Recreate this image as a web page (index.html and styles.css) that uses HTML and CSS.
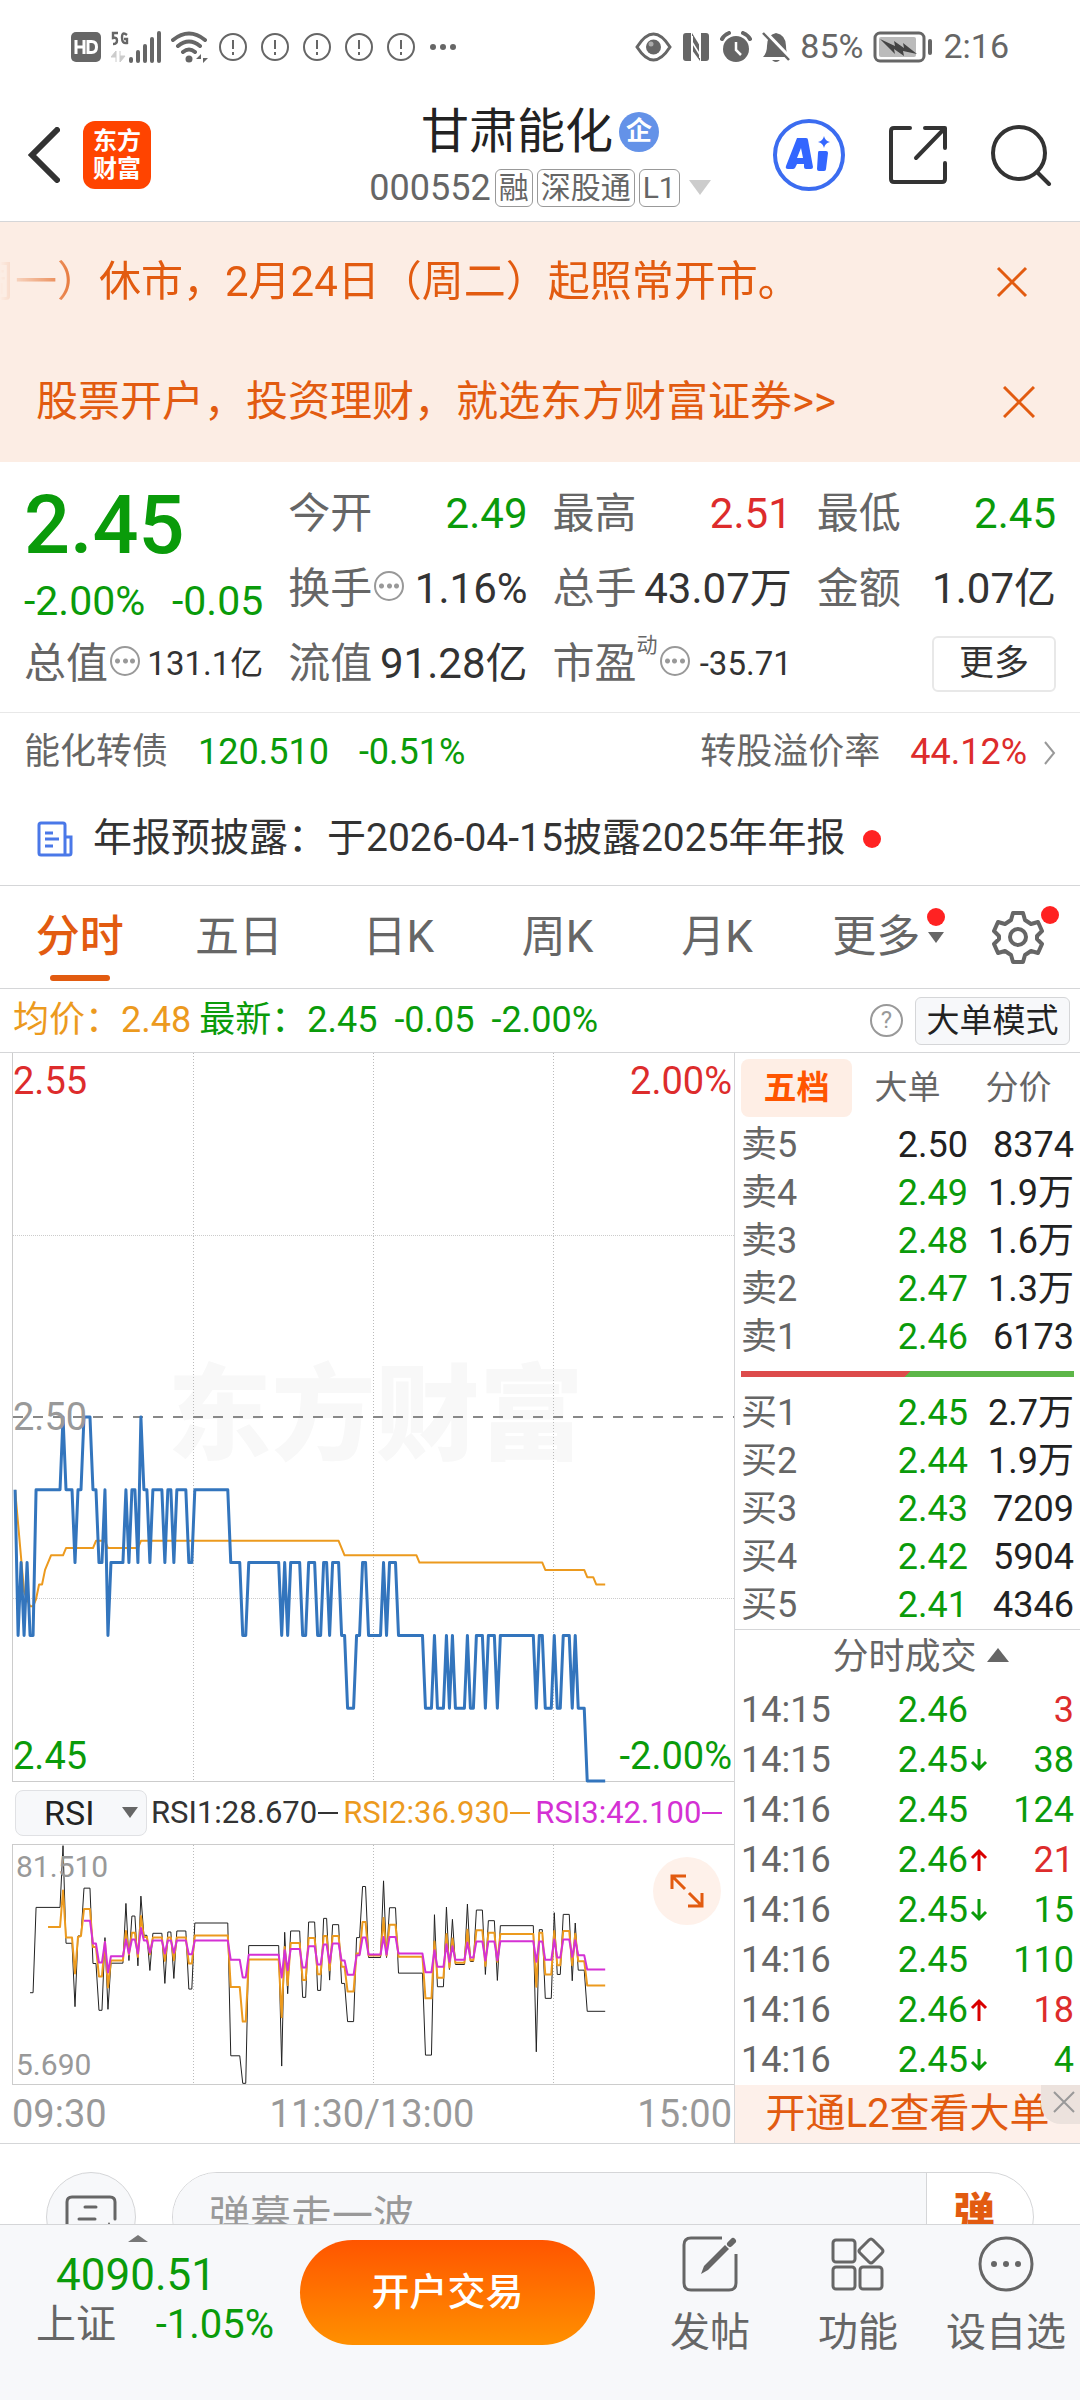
FILE: index.html
```html
<!DOCTYPE html>
<html lang="zh-CN">
<head>
    <meta charset="UTF-8">
    <meta name="viewport" content="width=device-width, initial-scale=1.0">
    <title>甘肃能化 000552</title>
    <link rel="stylesheet" href="styles.css">
</head>
<body>
    <div class="status-bar">
        <div class="status-left">
            <svg width="30" height="30" viewBox="0 0 30 30"><rect width="30" height="30" rx="5" fill="#666"/><path d="M5 8v14M13 8v14M5 15h8M17 9.500h3.500q5 0 5 5.500t-5 5.500h-3.500z" fill="none" stroke="#fff" stroke-width="3"/></svg>
            <svg class="signal" width="50" height="32" viewBox="0 0 50 32">
                <path d="M7 2H2v5q4-1 4 2.500T2 13M16 4q-5-4-5 2.500t5 5.500V8h-3" fill="none" stroke="#666" stroke-width="2.400"/>
                <path d="M5 31V20l-5 6h5M9 20v11l5-6H9" fill="#ccc" stroke="#ccc"/>
                <g fill="#666"><rect x="18" y="26" width="4" height="6" rx="2"/><rect x="25" y="19" width="4" height="13" rx="2"/><rect x="32" y="13" width="4" height="19" rx="2"/><rect x="39" y="6" width="4" height="26" rx="2"/><rect x="46" y="0" width="4" height="32" rx="2"/></g>
            </svg>
            <svg width="38" height="32" viewBox="0 0 38 32"><g fill="none" stroke="#666" stroke-width="4" stroke-linecap="round"><path d="M2 9q16-13 32 0M7 15q11-9 22 0M12 21q6-5 12 0"/></g><circle cx="18" cy="28" r="3.500" fill="#666"/><path d="M30 32v-9l-5 5h5M32 23v9l5-5h-5" fill="#666"/></svg>
            <svg class="alert" viewBox="0 0 28 28"><circle cx="14" cy="14" r="13"/><path d="M14 7v9M14 19v3"/></svg>
            <svg class="alert" viewBox="0 0 28 28"><circle cx="14" cy="14" r="13"/><path d="M14 7v9M14 19v3"/></svg>
            <svg class="alert" viewBox="0 0 28 28"><circle cx="14" cy="14" r="13"/><path d="M14 7v9M14 19v3"/></svg>
            <svg class="alert" viewBox="0 0 28 28"><circle cx="14" cy="14" r="13"/><path d="M14 7v9M14 19v3"/></svg>
            <svg class="alert" viewBox="0 0 28 28"><circle cx="14" cy="14" r="13"/><path d="M14 7v9M14 19v3"/></svg>
            <svg width="28" height="8" viewBox="0 0 28 8" fill="#666"><circle cx="4" cy="4" r="3"/><circle cx="14" cy="4" r="3"/><circle cx="24" cy="4" r="3"/></svg>
        </div>
        <div class="status-right">
            <svg width="37" height="30" viewBox="0 0 37 30"><path d="M2 15Q18.500-11 35 15Q18.500 41 2 15z" fill="none" stroke="#666" stroke-width="3"/><circle cx="18.500" cy="15" r="7.500" fill="#666"/><circle cx="16" cy="12" r="2.500" fill="#aaa"/></svg>
            <svg width="28" height="30" viewBox="0 0 28 30"><path d="M4 1h5v28H4q-3 0-3-3V4q0-3 3-3zM19 1h5q3 0 3 3v22q0 3-3 3h-5z" fill="#666"/><path d="M10 1l8 13v15l-8-11z" fill="#666"/><path d="M10 4v24M18 2v24" stroke="#fff" stroke-width="2"/><path d="M10 10l8 13" stroke="#fff" stroke-width="1.500"/></svg>
            <svg width="32" height="32" viewBox="0 0 32 32"><circle cx="16" cy="18" r="13" fill="#666"/><path d="M2 8q2-4 7-6M30 8q-2-4-7-6" fill="none" stroke="#666" stroke-width="4" stroke-linecap="round"/><path d="M16 11v8l5 5" fill="none" stroke="#fff" stroke-width="2.500"/></svg>
            <svg width="28" height="32" viewBox="0 0 28 32"><path d="M1 26q4-4 4-11Q5 4 14 2Q24 4 24 15q0 7 3 11zM10 29h8q-4 4-8 0z" fill="#666"/><path d="M3 1l26 27" stroke="#fff" stroke-width="4"/><path d="M1 2l26 27" stroke="#666" stroke-width="2.500"/></svg>
            <span>85%</span>
            <svg width="60" height="32" viewBox="0 0 60 32"><rect x="2" y="2" width="49" height="28" rx="5" fill="none" stroke="#666" stroke-width="3"/><rect x="6" y="6" width="37" height="20" rx="2" fill="#bbb"/><path d="M7 8l15 7-1-5 10 7-1-5 14 11-14-3 1 5-10-7 1 5z" fill="#444"/><rect x="55" y="8" width="4" height="16" rx="2" fill="#666"/></svg>
            <span>2:16</span>
        </div>
    </div>

    <header class="header">
        <div class="header-left">
            <button type="button" class="icon-btn" aria-label="返回"><svg width="32" height="56" viewBox="0 0 32 56"><path d="M29 3L4 28L29 53" fill="none" stroke="#333" stroke-width="6" stroke-linecap="round"/></svg></button>
            <div class="logo">东方<br>财富</div>
        </div>
        <div class="header-title">
            <h1>甘肃能化<span class="badge">企</span></h1>
            <div class="code">000552<span class="tag">融</span><span class="tag">深股通</span><span class="tag">L1</span><i class="tri-down"></i></div>
        </div>
        <div class="header-right">
            <button type="button" class="icon-btn" aria-label="AI"><svg width="74" height="74" viewBox="0 0 74 74"><circle cx="37" cy="37" r="34" fill="none" stroke="#3b6cf0" stroke-width="4"/><path fill-rule="evenodd" d="M25 20h9q2 0 2 2l5 27q0 2-2 2h-5q-2 0-2-2v-3h-7l-2 4q-1 1-2 1h-5q-3 0-2-3zM29 30l-4 10h6z" fill="#3366ff"/><path d="M47 33h7q2 0 2 2l-2 16q0 2-2 2h-5q-2 0-2-2l1-16q0-2 1-2zM52 18q1 5 6 6q-5 1-6 6q-1-5-6-6q5-1 6-6z" fill="#3366ff"/></svg></button>
            <button type="button" class="icon-btn" aria-label="分享"><svg width="60" height="60" viewBox="0 0 60 60" fill="none" stroke="#333" stroke-width="4" stroke-linecap="round" stroke-linejoin="round"><path d="M22 3H6q-3 0-3 3v48q0 3 3 3h48q3 0 3-3V38M37 3h20v20M56 4L28 33"/></svg></button>
            <button type="button" class="icon-btn" aria-label="搜索"><svg width="62" height="62" viewBox="0 0 62 62" fill="none" stroke="#333" stroke-width="4" stroke-linecap="round"><circle cx="29" cy="29" r="26"/><path d="M47 48l12 12"/></svg></button>
        </div>
    </header>

    <section class="banners">
        <div class="banner">
            <p class="marquee">周一）休市，2月24日（周二）起照常开市。</p>
            <button type="button" class="icon-btn" aria-label="关闭"><svg width="32" height="32" viewBox="0 0 32 32"><path d="M2 2l28 28M30 2L2 30" stroke="#e25b10" stroke-width="3"/></svg></button>
        </div>
        <div class="banner banner-ad">
            <a href="#">股票开户，投资理财，就选东方财富证券&gt;&gt;</a>
            <button type="button" class="icon-btn" aria-label="关闭"><svg width="32" height="32" viewBox="0 0 32 32"><path d="M1 1l30 30M31 1L1 31" stroke="#e25b10" stroke-width="3"/></svg></button>
        </div>
    </section>

    <section class="quote">
        <div class="quote-price">
            <div class="price down">2.45</div>
            <div class="change down"><span>-2.00%</span><span>-0.05</span></div>
        </div>
        <div class="cell"><span>今开</span><b class="down">2.49</b></div>
        <div class="cell"><span>最高</span><b class="up">2.51</b></div>
        <div class="cell"><span>最低</span><b class="down">2.45</b></div>
        <div class="cell"><span>换手<i class="more-dot"></i></span><b>1.16%</b></div>
        <div class="cell"><span>总手</span><b>43.07万</b></div>
        <div class="cell"><span>金额</span><b>1.07亿</b></div>
        <div class="cell"><span>总值<i class="more-dot"></i></span><b class="small">131.1亿</b></div>
        <div class="cell"><span>流值</span><b>91.28亿</b></div>
        <div class="cell"><span>市盈<sup>动</sup><i class="more-dot"></i></span><b class="small">-35.71</b></div>
        <div class="cell cell-more"><button type="button" class="more-btn">更多</button></div>
    </section>

    <a href="#" class="bond">
        <span>能化转债</span><span class="down">120.510</span><span class="down">-0.51%</span>
        <span class="bond-rate">转股溢价率</span><span class="up">44.12%</span>
        <svg width="12" height="26" viewBox="0 0 12 26"><path d="M1 2l9 11l-9 11" fill="none" stroke="#999" stroke-width="2"/></svg>
    </a>
    <a href="#" class="news">
        <svg width="36" height="36" viewBox="0 0 36 36" fill="none" stroke="#4a78e8" stroke-width="3"><path d="M28 34H4q-2 0-2-2V4q0-2 2-2h22q2 0 2 2v30h4q2 0 2-2V16h-6M8 12h8M8 18h14M8 25h8"/></svg>
        <span>年报预披露：于2026-04-15披露2025年年报</span>
        <i class="dot"></i>
    </a>

    <nav class="tabs">
        <a href="#" class="active">分时</a>
        <a href="#">五日</a>
        <a href="#">日K</a>
        <a href="#">周K</a>
        <a href="#">月K</a>
        <a href="#" class="tab-more">更多<i class="tri-small"></i><i class="dot"></i></a>
        <button type="button" class="icon-btn settings" aria-label="设置">
            <svg width="52" height="54" viewBox="0 0 52 54" fill="none" stroke="#666" stroke-width="4" stroke-linejoin="round"><path d="M21 3h10l2 7l6 4l7-2l4 9l-5 5v3l5 5l-4 9l-7-2l-6 4l-2 7H21l-2-7l-6-4l-7 2l-4-9l5-5v-3l-5-5l4-9l7 2l6-4z"/><circle cx="26" cy="27" r="8"/></svg>
            <i class="dot"></i>
        </button>
    </nav>

    <div class="summary">
        <span class="avg">均价：2.48</span>
        <span class="down">最新：2.45</span>
        <span class="down">-0.05</span>
        <span class="down">-2.00%</span>
        <span class="help">?</span>
        <button type="button" class="mode-btn">大单模式</button>
    </div>

    <main class="trade">
        <section class="charts">
            <div class="chart chart-price">
                <div class="watermark">东方财富</div>
                <div class="grid grid-rows"></div>
                <svg class="plot" viewBox="-0.700 0 240.700 100" preserveAspectRatio="none">
                    <line class="base" x1="-0.700" y1="50" x2="240" y2="50"/>
                    <polyline class="l-avg" points="0,60 3,74 5,76 6,76 7,75 8,73 9,73 10,71 12,69 16,69 17,68 26,68 27,67 30,67 31,68 41,68 42,67 108,67 110,69 134,69 135,70 176,70 177,71 190,71 191,72 193,72 194,73 197,73"/>
                    <polyline class="l-price" points="0,60 1,80 2,70 3,80 4,70 5,80 6,80 7,60 15,60 16,50 17,60 19,60 20,70 21,60 22,60 23,50 25,50 26,60 27,60 28,70 29,70 30,60 31,80 32,70 36,70 37,60 38,70 39,60 40,60 41,70 42,50 43,60 44,60 45,70 46,60 49,60 50,70 51,60 52,60 53,70 54,60 57,60 58,70 59,70 60,60 71,60 72,70 75,70 76,80 77,80 78,70 88,70 89,80 90,70 91,80 92,70 95,70 96,80 97,80 98,70 100,70 101,80 102,80 103,70 104,70 105,80 106,70 108,70 109,80 110,80 111,90 113,90 114,80 115,80 116,70 117,70 118,80 122,80 123,70 124,80 125,70 127,70 128,80 136,80 137,90 139,90 140,80 141,90 143,90 144,80 145,90 146,80 147,90 150,90 151,80 152,90 153,90 154,80 156,80 157,90 158,80 160,80 161,90 162,80 173,80 174,90 175,80 176,80 177,90 179,90 180,80 181,90 182,90 183,80 185,80 186,90 187,80 188,90 190,90 191,100 197,100"/>
                </svg>
                <span class="label top-left up">2.55</span>
                <span class="label top-right up">2.00%</span>
                <span class="label mid-left">2.50</span>
                <span class="label bottom-left down">2.45</span>
                <span class="label bottom-right down">-2.00%</span>
            </div>

            <div class="legend">
                <div class="select-wrap">
                    <select aria-label="指标"><option>RSI</option><option>MACD</option><option>KDJ</option></select>
                    <i class="tri-small"></i>
                </div>
                <span>RSI1:28.670<i></i></span>
                <span class="avg">RSI2:36.930<i></i></span>
                <span class="rsi3">RSI3:42.100<i></i></span>
            </div>

            <div class="chart chart-rsi">
                <div class="grid"></div>
                <svg class="plot" viewBox="-0.700 0 240.700 720" preserveAspectRatio="none">
                    <polyline class="l-rsi1" points="5,445 6,445 7,188 15,188 16,2 17,296 19,296 20,487 21,274 22,274 23,130 25,130 26,357 27,357 28,498 29,498 30,279 31,495 32,356 36,356 37,176 38,348 39,214 40,214 41,364 42,154 43,272 44,272 45,378 46,266 49,266 50,417 51,262 52,262 53,402 54,259 57,259 58,434 59,434 60,235 71,235 72,635 75,635 76,718 77,718 78,303 88,303 89,666 90,263 91,448 92,259 95,259 96,459 97,459 98,232 100,232 101,438 102,438 103,221 104,221 105,407 106,240 108,240 109,417 110,417 111,532 113,532 114,279 115,279 116,125 117,125 118,339 122,339 123,108 124,339 125,189 127,189 128,386 136,386 137,633 139,633 140,210 141,427 143,427 144,187 145,375 146,224 147,360 150,360 151,178 152,351 153,351 154,196 156,196 157,390 158,228 160,228 161,408 162,243 173,243 174,623 175,255 176,255 177,462 179,462 180,204 181,390 182,390 183,209 185,209 186,409 187,235 188,377 190,377 191,501 197,501"/>
                    <polyline class="l-avg" points="11,247 15,247 16,137 17,279 19,279 20,387 21,277 22,274 23,193 25,193 26,307 27,307 28,396 29,396 30,292 31,429 32,348 36,348 37,259 38,330 39,264 40,264 41,337 42,214 43,277 44,277 45,329 46,279 49,279 50,349 51,279 52,279 53,347 54,279 57,279 58,357 59,357 60,273 71,273 72,428 75,428 76,532 77,532 78,345 88,345 89,519 90,307 91,422 92,295 95,295 96,407 97,407 98,280 100,280 101,389 102,389 103,274 104,274 105,377 106,274 108,274 109,367 110,367 111,441 113,441 114,327 115,327 116,232 117,232 118,333 122,333 123,220 124,333 125,240 127,240 128,337 136,337 137,462 139,462 140,291 141,400 143,400 144,268 145,369 146,282 147,355 150,355 151,255 152,347 153,347 154,257 156,257 157,364 158,264 160,264 161,352 162,268 173,268 174,427 175,264 176,264 177,390 179,390 180,259 181,362 182,362 183,259 185,259 186,362 187,267 188,350 190,350 191,423 197,423"/>
                    <polyline class="l-rsi3" points="23,228 25,228 26,297 27,297 28,354 29,354 30,292 31,384 32,335 36,335 37,285 38,327 39,285 40,285 41,327 42,250 43,288 44,288 45,324 46,288 49,288 50,327 51,288 52,288 53,325 54,288 57,288 58,329 59,329 60,288 71,288 72,346 75,346 76,399 77,399 78,331 88,331 89,399 90,317 91,377 92,313 95,313 96,369 97,369 98,305 100,305 101,360 102,360 103,300 104,300 105,355 106,297 108,297 109,348 110,348 111,391 113,391 114,332 115,332 116,279 117,279 118,330 122,330 123,277 124,330 125,277 127,277 128,327 136,327 137,383 139,383 140,317 141,367 143,367 144,299 145,352 146,305 147,346 150,346 151,294 152,339 153,339 154,291 156,291 157,348 158,291 160,291 161,347 162,290 173,290 174,352 175,291 176,291 177,346 179,346 180,285 181,339 182,339 183,285 185,285 186,337 187,287 188,332 190,332 191,375 197,375"/>
                </svg>
                <span class="label-small top-left">81.510</span>
                <span class="label-small bottom-left">5.690</span>
                <button type="button" class="expand" aria-label="全屏"><svg width="34" height="34" viewBox="0 0 34 34" fill="none" stroke="#e25b10" stroke-width="3"><path d="M2 15V2h14M2 2l13 13M32 19v13H18M32 32L19 19"/></svg></button>
            </div>
            <div class="axis"><span>09:30</span><span>11:30/13:00</span><span>15:00</span></div>
        </section>

        <aside class="orders">
            <nav class="order-tabs">
                <a href="#" class="active">五档</a>
                <a href="#">大单</a>
                <a href="#">分价</a>
            </nav>
            <table class="book">
                <tr><th>卖5</th><td>2.50</td><td>8374</td></tr>
                <tr><th>卖4</th><td class="down">2.49</td><td>1.9万</td></tr>
                <tr><th>卖3</th><td class="down">2.48</td><td>1.6万</td></tr>
                <tr><th>卖2</th><td class="down">2.47</td><td>1.3万</td></tr>
                <tr><th>卖1</th><td class="down">2.46</td><td>6173</td></tr>
            </table>
            <div class="ratio"></div>
            <table class="book">
                <tr><th>买1</th><td class="down">2.45</td><td>2.7万</td></tr>
                <tr><th>买2</th><td class="down">2.44</td><td>1.9万</td></tr>
                <tr><th>买3</th><td class="down">2.43</td><td>7209</td></tr>
                <tr><th>买4</th><td class="down">2.42</td><td>5904</td></tr>
                <tr><th>买5</th><td class="down">2.41</td><td>4346</td></tr>
            </table>
            <button type="button" class="deals-title">分时成交<i class="tri-up"></i></button>
            <table class="deals">
                <tr><th>14:15</th><td class="down">2.46</td><td></td><td class="up">3</td></tr>
                <tr><th>14:15</th><td class="down">2.45</td><td class="down"><svg class="arrow" viewBox="0 0 18 24"><path d="M9 1v20M2 14l7 7l7-7"/></svg></td><td class="down">38</td></tr>
                <tr><th>14:16</th><td class="down">2.45</td><td></td><td class="down">124</td></tr>
                <tr><th>14:16</th><td class="down">2.46</td><td class="rise"><svg class="arrow" viewBox="0 0 18 24"><path d="M9 23V3M2 10l7-7l7 7"/></svg></td><td class="up">21</td></tr>
                <tr><th>14:16</th><td class="down">2.45</td><td class="down"><svg class="arrow" viewBox="0 0 18 24"><path d="M9 1v20M2 14l7 7l7-7"/></svg></td><td class="down">15</td></tr>
                <tr><th>14:16</th><td class="down">2.45</td><td></td><td class="down">110</td></tr>
                <tr><th>14:16</th><td class="down">2.46</td><td class="rise"><svg class="arrow" viewBox="0 0 18 24"><path d="M9 23V3M2 10l7-7l7 7"/></svg></td><td class="up">18</td></tr>
                <tr><th>14:16</th><td class="down">2.45</td><td class="down"><svg class="arrow" viewBox="0 0 18 24"><path d="M9 1v20M2 14l7 7l7-7"/></svg></td><td class="down">4</td></tr>
            </table>
            <div class="level2">
                <a href="#">开通L2查看大单</a>
                <button type="button" class="level2-close" aria-label="关闭"><svg width="22" height="22" viewBox="0 0 22 22"><path d="M1 1l20 20M21 1L1 21" stroke="#999" stroke-width="2"/></svg></button>
            </div>
        </aside>
    </main>

    <form class="danmu">
        <button type="button" class="danmu-list" aria-label="弹幕列表"><svg width="52" height="46" viewBox="0 0 52 46" fill="none" stroke="#666" stroke-width="3" stroke-linecap="round"><path d="M50 24V7q0-5-5-5H7Q2 2 2 7v32q0 5 5 5h20M20 12h11M14 24h16M36 44l8-14 8 14"/></svg></button>
        <div class="danmu-box">
            <input type="text" placeholder="弹幕走一波" aria-label="弹幕">
            <button type="submit">弹</button>
        </div>
    </form>

    <footer class="footer">
        <a href="#" class="index">
            <i class="tri-mini"></i>
            <strong class="down">4090.51</strong>
            <span>上证<em class="down">-1.05%</em></span>
        </a>
        <button type="button" class="open-btn">开户交易</button>
        <div class="actions">
            <a href="#">
                <svg width="56" height="56" viewBox="0 0 56 56"><path d="M40 2H9Q2 2 2 9v38q0 7 7 7h38q7 0 7-7V18" fill="none" stroke="#666" stroke-width="3"/><path d="M19 38l3-8L43 9l4 4L26 34z" fill="#666"/><path d="M48 8l3-3" stroke="#666" stroke-width="6" stroke-linecap="round"/></svg>
                发帖
            </a>
            <a href="#">
                <svg width="56" height="56" viewBox="0 0 56 56" fill="none" stroke="#666" stroke-width="3"><rect x="3" y="4" width="22" height="22" rx="3"/><rect x="3" y="31" width="22" height="22" rx="3"/><rect x="30" y="31" width="22" height="22" rx="3"/><path d="M39 4q2-2 4 0l9 9q2 2 0 4l-9 9q-2 2-4 0l-9-9q-2-2 0-4z"/></svg>
                功能
            </a>
            <a href="#">
                <svg width="56" height="56" viewBox="0 0 56 56"><circle cx="28" cy="28" r="26" fill="none" stroke="#666" stroke-width="3"/><g fill="#666"><circle cx="16" cy="28" r="3"/><circle cx="28" cy="28" r="3"/><circle cx="40" cy="28" r="3"/></g></svg>
                设自选
            </a>
        </div>
    </footer>
</body>
</html>
```
FILE: styles.css
```css
* {
    box-sizing: border-box;
}

body {
    font-family: Roboto, "Noto Sans CJK SC", sans-serif;
    line-height: 1.4;
    margin: 0;
    padding-bottom: 138px;
    background-color: #fff;
    color: #333;
}

a {
    color: inherit;
    text-decoration: none;
}

i, em {
    font-style: normal;
}

svg {
    display: block;
    flex: none;
}

button, select, input {
    font-family: inherit;
    line-height: inherit;
    color: inherit;
    margin: 0;
    padding: 0;
    border: none;
    background: none;
}

.icon-btn {
    display: flex;
    flex: none;
}

.up {
    color: #dd2c2c;
}

.down {
    color: #0a9b0a;
}

.rise {
    color: #d80000;
}

.avg {
    color: #ec9a1e;
}

.dot {
    width: 18px;
    height: 18px;
    border-radius: 50%;
    background-color: #f22;
}

/* Status bar */
.status-bar {
    display: flex;
    justify-content: space-between;
    align-items: center;
    height: 88px;
    padding: 6px 71px 0;
    color: #666;
    font-size: 34px;
}

.status-left, .status-right {
    display: flex;
    align-items: center;
    gap: 10px;
}

.alert {
    width: 28px;
    height: 28px;
    margin-right: 4px;
    fill: none;
    stroke: #666;
    stroke-width: 2;
}

/* Header */
.header {
    display: grid;
    grid-template-columns: 1fr auto 1fr;
    align-items: center;
    height: 134px;
    padding: 0 28px;
    border-bottom: 1px solid #d5d6d8;
}

.header-left, .header-right {
    display: flex;
    align-items: center;
}

.header-left {
    gap: 23px;
}

.header-right {
    justify-content: flex-end;
    gap: 42px;
}

.logo {
    width: 68px;
    height: 68px;
    padding-top: 6px;
    border-radius: 12px;
    background-color: #f40;
    color: #fff;
    font-size: 24px;
    font-weight: bold;
    line-height: 28px;
    text-align: center;
}

.header-title {
    padding-top: 6px;
}

.header-title h1 {
    display: flex;
    align-items: center;
    justify-content: center;
    gap: 6px;
    margin: 0;
    color: #222;
    font-size: 48px;
    font-weight: normal;
    line-height: 60px;
}

.badge {
    width: 40px;
    height: 40px;
    border-radius: 50%;
    background-color: #6492e8;
    color: #fff;
    font-size: 26px;
    font-weight: bold;
    line-height: 38px;
    text-align: center;
}

.code {
    display: flex;
    align-items: center;
    justify-content: center;
    gap: 4px;
    color: #666;
    font-size: 36px;
    line-height: 52px;
}

.tag {
    height: 38px;
    padding: 0 3px;
    border: 1px solid #999;
    border-radius: 6px;
    font-size: 30px;
    line-height: 36px;
}

.tri-down {
    margin-left: 5px;
    border: 11px solid transparent;
    border-top: 15px solid #ccc;
    border-bottom: none;
}

/* Notice banners */
.banners {
    background-color: #fcede4;
    color: #e25b10;
    font-size: 42px;
}

.banner {
    display: flex;
    align-items: center;
    justify-content: space-between;
    height: 120px;
    padding-right: 52px;
}

.banner-ad {
    padding: 0 45px 0 36px;
}

.marquee {
    flex: 1;
    margin: 0;
    overflow: hidden;
    text-indent: -27px;
    white-space: nowrap;
    -webkit-mask-image: linear-gradient(to right, transparent, #000 90px);
    mask-image: linear-gradient(to right, transparent, #000 90px);
}

/* Quote */
.quote {
    display: grid;
    grid-template-columns: repeat(4, 1fr);
    grid-template-rows: repeat(3, 75px);
    column-gap: 25px;
    padding: 14px 24px 11px;
    border-bottom: 1px solid #e8e8e8;
}

.quote-price {
    grid-row: span 2;
}

.price {
    font-size: 81px;
    font-weight: 500;
    line-height: 100px;
}

.change {
    display: flex;
    justify-content: space-between;
    font-size: 41px;
    line-height: 50px;
    white-space: nowrap;
}

.cell {
    display: flex;
    align-items: center;
    justify-content: space-between;
    font-size: 42px;
    line-height: 60px;
    white-space: nowrap;
}

.cell > span {
    display: flex;
    align-items: center;
    color: #666;
}

.cell b {
    font-weight: normal;
}

.cell .small {
    font-size: 33px;
}

.cell sup {
    align-self: flex-start;
    font-size: 21px;
    line-height: 22px;
}

.more-dot {
    width: 30px;
    height: 30px;
    margin: 0 0 6px 2px;
    border: 2px solid #999;
    border-radius: 50%;
    background: radial-gradient(circle, #999 2px, transparent 3px) center / 7px 26px no-repeat,
        radial-gradient(circle, #999 2px, transparent 3px) 2px center / 7px 26px no-repeat,
        radial-gradient(circle, #999 2px, transparent 3px) 17px center / 7px 26px no-repeat;
}

.cell-more {
    justify-content: flex-end;
}

.more-btn {
    width: 124px;
    height: 56px;
    border: 2px solid #e8e8e8;
    border-radius: 6px;
    font-size: 35px;
    line-height: 50px;
}

/* Bond and news */
.bond {
    display: flex;
    align-items: center;
    gap: 30px;
    height: 79px;
    padding: 0 24px;
    color: #666;
    font-size: 36px;
}

.bond-rate {
    margin-left: auto;
}

.bond svg {
    margin-left: -13px;
}

.news {
    display: flex;
    align-items: center;
    gap: 20px;
    height: 93px;
    padding: 0 37px;
    font-size: 39px;
}

.news .dot {
    margin-left: -3px;
}

/* Period tabs */
.tabs {
    display: flex;
    align-items: center;
    height: 104px;
    border-top: 1px solid #d5d6d8;
    border-bottom: 1px solid #d5d6d8;
    color: #666;
    font-size: 44px;
}

.tabs a {
    position: relative;
    flex: 1;
    line-height: 102px;
    text-align: center;
}

.tabs .active {
    color: #e25b10;
    font-weight: 500;
}

.tabs .active::after {
    content: "";
    position: absolute;
    left: 50%;
    bottom: 7px;
    width: 60px;
    height: 6px;
    margin-left: -30px;
    border-radius: 3px;
    background-color: #e25b10;
}

.tri-small {
    border: 8px solid transparent;
    border-top: 11px solid #666;
    border-bottom: none;
}

.tab-more .tri-small {
    position: absolute;
    right: 12px;
    top: 46px;
}

.tab-more .dot {
    position: absolute;
    right: 11px;
    top: 22px;
}

.settings {
    position: relative;
    justify-content: center;
    width: 124px;
}

.settings .dot {
    position: absolute;
    right: 21px;
    top: -4px;
}

.summary {
    display: flex;
    align-items: center;
    gap: 17px;
    height: 63px;
    padding: 0 10px 0 13px;
    font-size: 36px;
}

.summary .avg {
    margin-right: -9px;
}

.help {
    width: 33px;
    height: 33px;
    margin-left: auto;
    margin-right: -5px;
    border: 2px solid #999;
    border-radius: 50%;
    color: #999;
    font-size: 24px;
    line-height: 29px;
    text-align: center;
}

.mode-btn {
    width: 155px;
    height: 48px;
    border: 1px solid #d5d6d8;
    border-radius: 6px;
    background-color: #f7f8fa;
    color: #222;
    font-size: 33px;
    line-height: 44px;
}

/* Charts */
.trade {
    display: flex;
    border-top: 1px solid #d5d6d8;
    border-bottom: 1px solid #d5d6d8;
}

.charts {
    display: flex;
    flex: 1;
    flex-direction: column;
    min-width: 0;
    padding-left: 12px;
}

.chart {
    position: relative;
    border-left: 1px solid #ccc;
    border-bottom: 1px solid #ccc;
}

.chart-price {
    height: 729px;
}

.chart-rsi {
    height: 241px;
    border-top: 1px solid #ccc;
}

.grid, .plot {
    position: absolute;
    top: 0;
    left: 0;
    width: 100%;
    height: 100%;
}

.grid {
    background: repeating-linear-gradient(#bbb 0 1px, transparent 1px 3px) 25% 0 / 1px 100% no-repeat,
        repeating-linear-gradient(#bbb 0 1px, transparent 1px 3px) 50% 0 / 1px 100% no-repeat,
        repeating-linear-gradient(#bbb 0 1px, transparent 1px 3px) 75% 0 / 1px 100% no-repeat;
}

.grid-rows::before {
    content: "";
    position: absolute;
    top: 25%;
    bottom: 25%;
    left: 0;
    right: 0;
    border-top: 1px dotted #ccc;
    border-bottom: 1px dotted #ccc;
}

.plot {
    overflow: visible;
}

.plot polyline, .plot line {
    fill: none;
    stroke-width: 2;
    stroke-linejoin: round;
    vector-effect: non-scaling-stroke;
}

.plot .base {
    stroke: #888;
    stroke-dasharray: 10 10;
}

.plot .l-price {
    stroke: #3375bd;
    stroke-width: 3;
}

.plot .l-avg {
    stroke: #ec9a1e;
}

.plot .l-rsi1 {
    stroke: #222;
    stroke-width: 1;
}

.plot .l-rsi3 {
    stroke: #d431d4;
}

.watermark {
    position: absolute;
    top: 50%;
    left: 0;
    right: 0;
    margin-top: -60px;
    padding-left: 4px;
    color: #f8f8f8;
    font-size: 104px;
    font-weight: 900;
    line-height: 120px;
    text-align: center;
}

.label, .label-small {
    position: absolute;
    color: #999;
    font-size: 38px;
    line-height: 44px;
}

.label-small {
    padding: 0 3px;
    font-size: 30px;
    line-height: 32px;
}

.label.up {
    color: #dd2c2c;
}

.label.down {
    color: #0a9b0a;
}

.top-left {
    top: 6px;
    left: 0;
}

.top-right {
    top: 6px;
    right: 2px;
}

.mid-left {
    top: 50%;
    left: 0;
    margin-top: -22px;
}

.bottom-left {
    bottom: 3px;
    left: 0;
}

.bottom-right {
    bottom: 3px;
    right: 2px;
}

.legend {
    display: flex;
    align-items: center;
    gap: 4px;
    height: 62px;
    padding-left: 3px;
    font-size: 31px;
    white-space: nowrap;
}

.legend span {
    display: flex;
    align-items: center;
}

.legend span i {
    width: 20px;
    height: 2px;
    margin: 0 1px;
    background-color: currentColor;
}

.rsi3 {
    color: #d431d4;
}

.select-wrap {
    position: relative;
    color: #222;
}

.select-wrap select {
    width: 132px;
    height: 46px;
    padding-left: 28px;
    border: 1px solid #e0e1e4;
    border-radius: 8px;
    background-color: #f7f8fa;
    font-size: 34px;
    line-height: 44px;
    appearance: none;
}

.select-wrap .tri-small {
    position: absolute;
    right: 9px;
    top: 17px;
}

.expand {
    position: absolute;
    top: 12px;
    right: 13px;
    display: flex;
    align-items: center;
    justify-content: center;
    width: 68px;
    height: 68px;
    border-radius: 50%;
    background-color: #fef1ea;
}

.axis {
    display: flex;
    justify-content: space-between;
    padding-right: 2px;
    color: #999;
    font-size: 38px;
    line-height: 58px;
}

/* Order book */
.orders {
    display: flex;
    flex-direction: column;
    width: 346px;
    border-left: 1px solid #d5d6d8;
    font-size: 36px;
}

.order-tabs {
    display: flex;
    padding: 6px 6px 4px;
    color: #666;
    font-size: 33px;
    line-height: 58px;
    text-align: center;
}

.order-tabs a {
    flex: 1;
}

.order-tabs .active {
    border-radius: 8px;
    background-color: #feeee5;
    color: #f50;
    font-weight: bold;
}

.book, .deals {
    width: 333px;
    margin-left: 6px;
    border-collapse: collapse;
    table-layout: fixed;
    color: #222;
}

.book th, .book td, .deals th, .deals td {
    height: 48px;
    padding: 0;
    font-weight: normal;
    line-height: 48px;
    text-align: right;
}

.book th, .deals th {
    width: 126px;
    color: #666;
    text-align: left;
}

.book td:last-child {
    width: 106px;
}

.deals th, .deals td {
    height: 50px;
    line-height: 50px;
}

.deals td:nth-child(3) {
    width: 22px;
}

.deals td:last-child {
    width: 84px;
}

.book .down, .deals .down {
    color: #0a9b0a;
}

.deals .up {
    color: #dd2c2c;
}

.deals .rise {
    color: #d80000;
}

.arrow {
    width: 18px;
    height: 24px;
    margin-left: 2px;
    fill: none;
    stroke: currentColor;
    stroke-width: 3;
}

.ratio {
    height: 6px;
    margin: 10px 6px 12px;
    background: linear-gradient(135deg, #dd4b4b 50%, #5db648 50%);
}

.deals-title {
    display: flex;
    align-items: center;
    justify-content: center;
    gap: 10px;
    height: 56px;
    padding-left: 26px;
    border-top: 1px solid #d5d6d8;
    color: #666;
    font-size: 36px;
}

.tri-up {
    margin-bottom: 6px;
    border: 11px solid transparent;
    border-bottom: 14px solid #666;
    border-top: none;
}

.level2 {
    position: relative;
    flex: 1;
    background-color: #fdf0ea;
    color: #e25b10;
    font-size: 40px;
    line-height: 58px;
    text-align: center;
}

.level2-close {
    position: absolute;
    top: 0;
    right: 0;
    display: flex;
    align-items: center;
    justify-content: center;
    width: 39px;
    height: 39px;
    padding-left: 6px;
    padding-bottom: 6px;
    border-radius: 0 0 0 20px;
    background-color: #ece2dd;
}

/* Comment bar */
.danmu {
    display: flex;
    gap: 36px;
    padding: 28px 46px 0;
}

.danmu-list {
    display: flex;
    justify-content: center;
    width: 90px;
    height: 90px;
    padding-top: 22px;
    border: 1px solid #d5d6d8;
    border-radius: 50%;
    background-color: #f7f8fa;
}

.danmu-box {
    display: flex;
    flex: 1;
    height: 90px;
    overflow: hidden;
    border: 1px solid #d5d6d8;
    border-radius: 45px;
}

.danmu-box input {
    flex: 1;
    min-width: 0;
    padding-left: 36px;
    background-color: #f7f8fa;
    font-size: 41px;
}

.danmu-box input::placeholder {
    color: #999;
}

.danmu-box button {
    width: 107px;
    padding: 0 12px 6px 0;
    border-left: 1px solid #d5d6d8;
    color: #e25b10;
    font-size: 41px;
    font-weight: 900;
}

/* Bottom bar */
.footer {
    position: fixed;
    left: 0;
    right: 0;
    bottom: 0;
    display: flex;
    align-items: flex-start;
    height: 176px;
    border-top: 1px solid #d5d6d8;
    background-color: #f7f8fa;
    color: #666;
    font-size: 40px;
}

.index {
    display: flex;
    flex-direction: column;
    align-items: center;
    width: 300px;
    padding: 10px 26px 0 36px;
}

.tri-mini {
    margin-right: 34px;
    border: 10px solid transparent;
    border-bottom: 7px solid #777;
    border-top: none;
}

.index strong {
    margin-top: 8px;
    margin-right: 38px;
    font-size: 44px;
    font-weight: normal;
    line-height: 50px;
}

.index span {
    display: flex;
    justify-content: space-between;
    width: 100%;
    line-height: 50px;
}

.open-btn {
    width: 295px;
    height: 105px;
    margin-top: 15px;
    border-radius: 53px;
    background: linear-gradient(#f50, #ff9000);
    color: #fff;
    font-size: 38px;
    font-weight: 500;
}

.actions {
    display: flex;
    flex: 1;
    padding: 11px 0 0 41px;
}

.actions a {
    display: flex;
    flex: 1;
    flex-direction: column;
    align-items: center;
    gap: 12px;
    line-height: 58px;
}
```
